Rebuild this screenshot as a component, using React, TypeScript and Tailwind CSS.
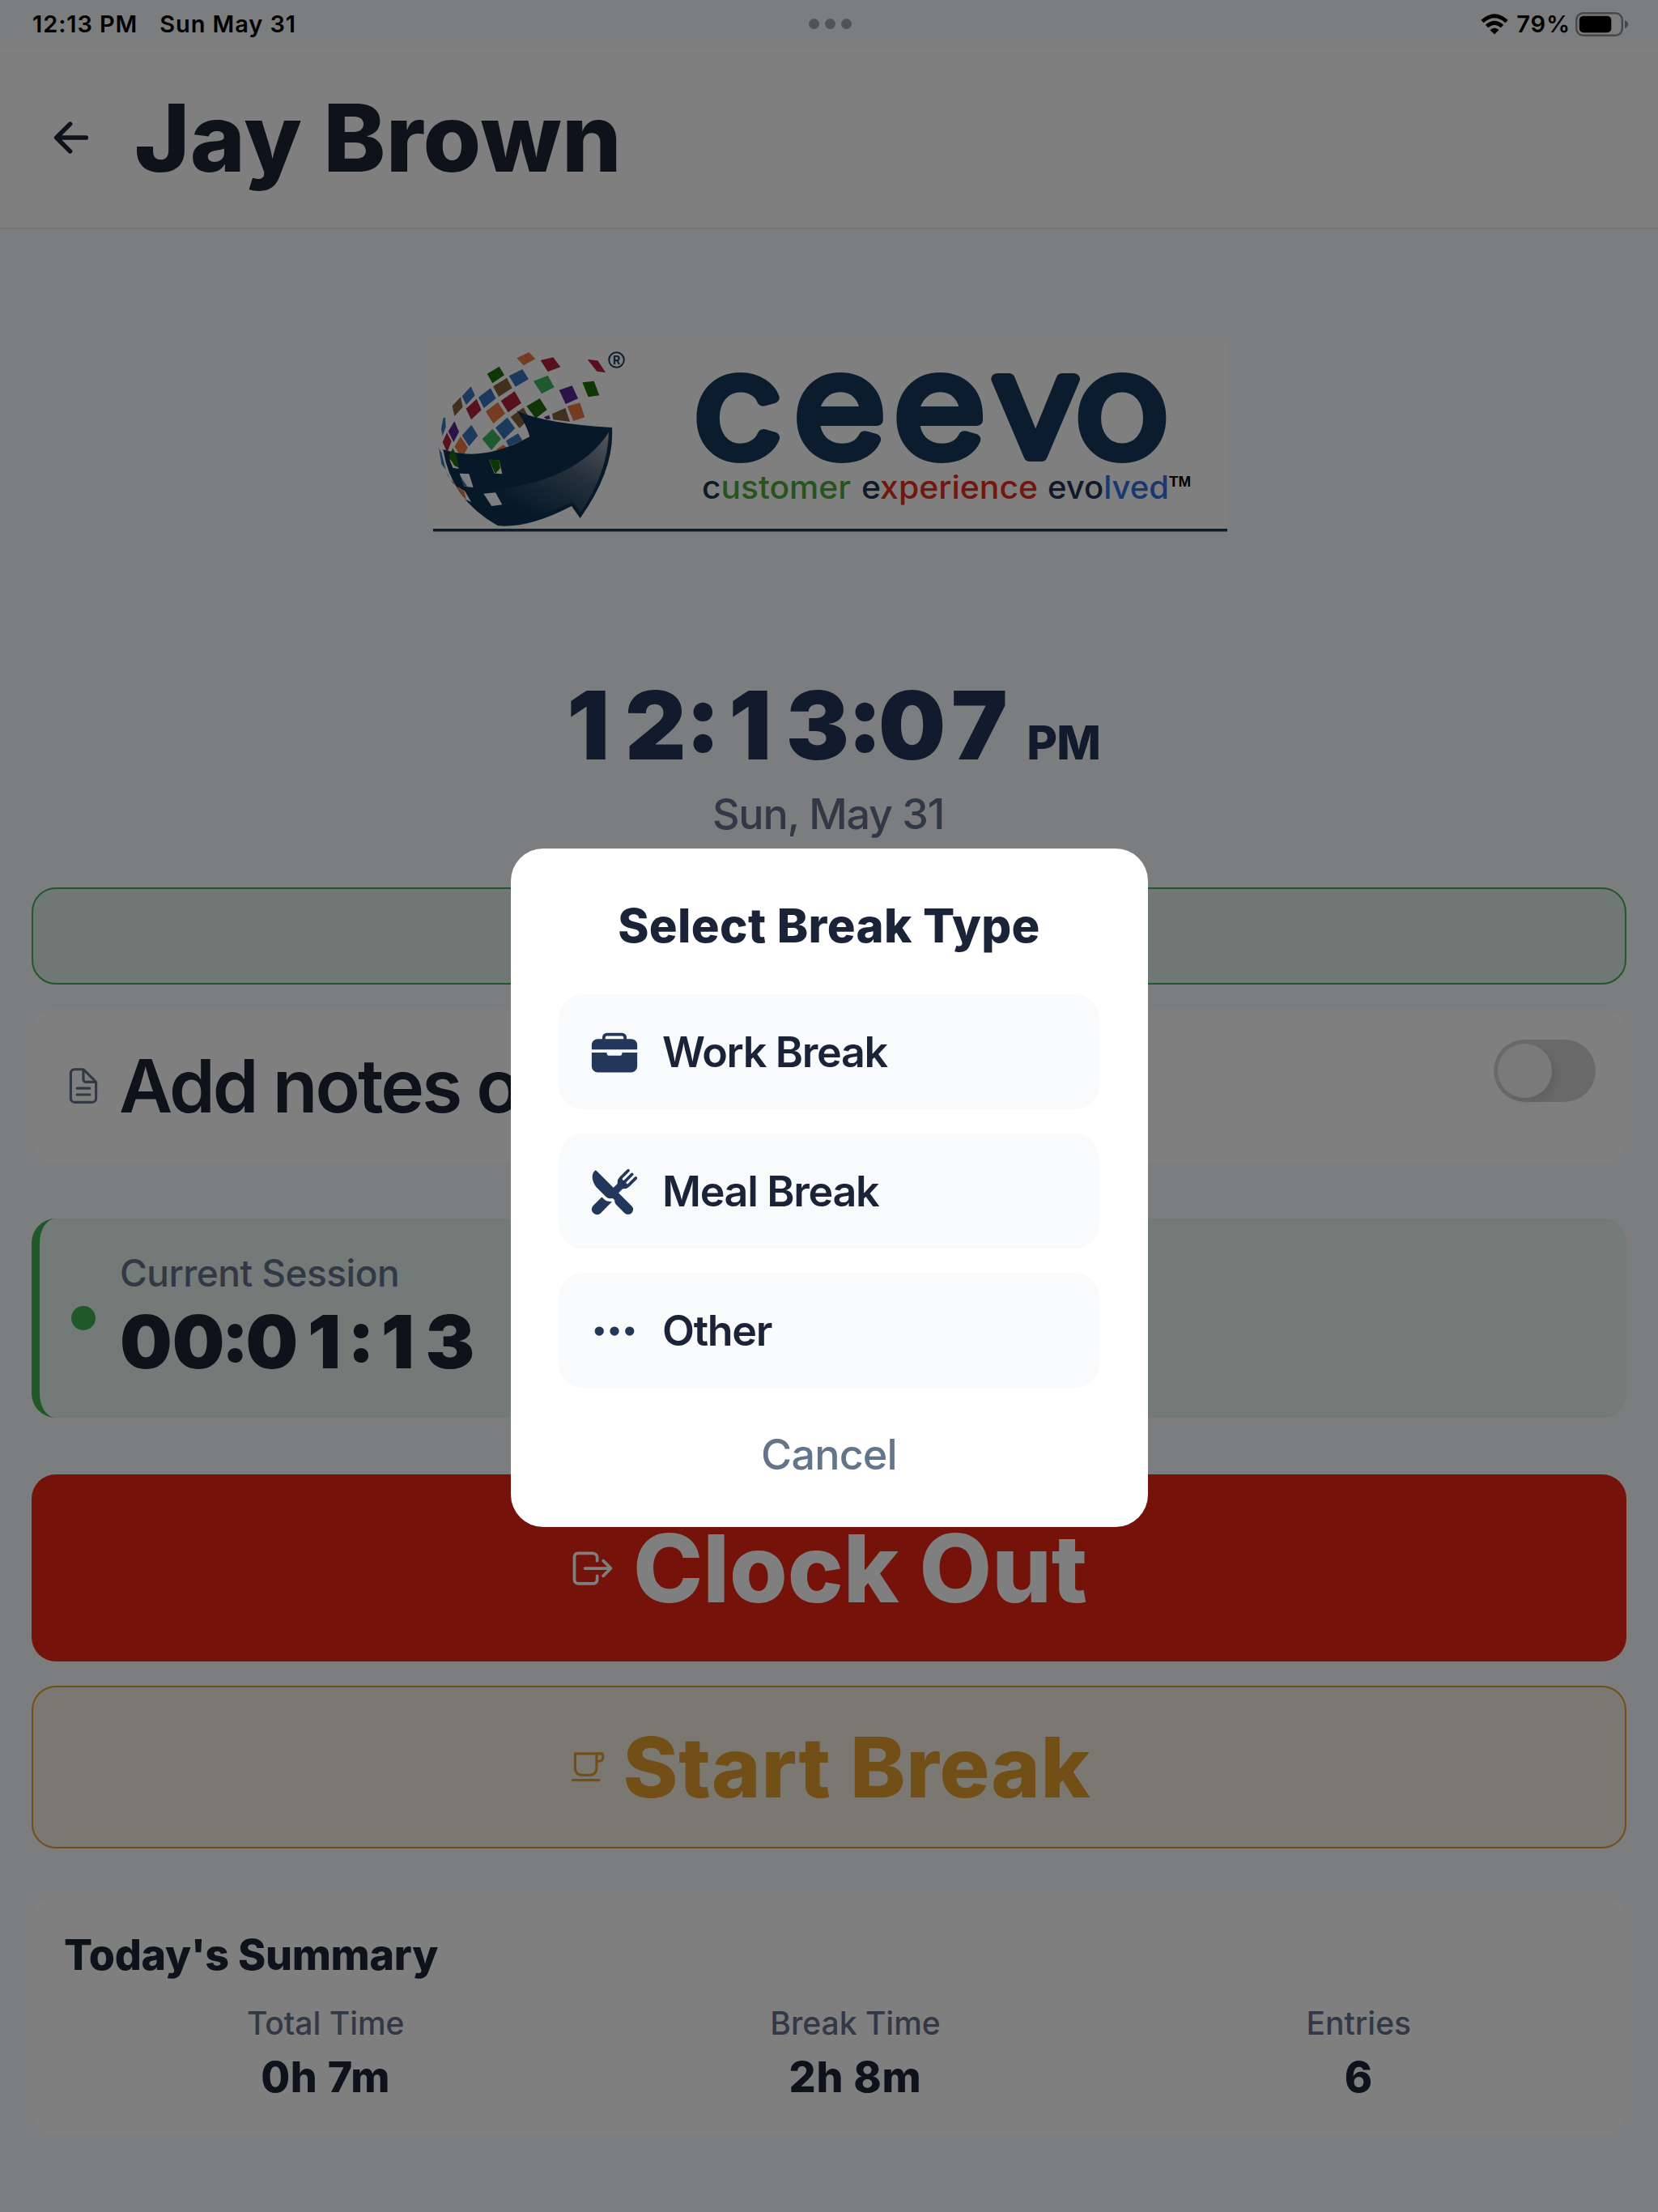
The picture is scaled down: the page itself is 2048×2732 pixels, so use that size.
import { useState } from "react";
import {
  IoArrowBack,
  IoBriefcase,
  IoCafeOutline,
  IoDocumentTextOutline,
  IoEllipsisHorizontal,
  IoLogOutOutline,
  IoRestaurant,
} from "react-icons/io5";

const BREAK_TYPES = [
  { label: "Work Break", icon: IoBriefcase },
  { label: "Meal Break", icon: IoRestaurant },
  { label: "Other", icon: IoEllipsisHorizontal },
];

const SUMMARY = [
  { label: "Total Time", value: "0h 7m" },
  { label: "Break Time", value: "2h 8m" },
  { label: "Entries", value: "6" },
];

// Globe tiles, one polygon per coloured square
const TILES = [
  { fill: "#e87a44", points: "355,97 400,75 424,100 380,124" },
  { fill: "#b02038", points: "443,105 490,94 517,130 470,147" },
  { fill: "#b02038", points: "617,102 655,106 684,150 652,146" },
  { fill: "#1e6e0c", points: "245,155 290,128 309,160 265,190" },
  { fill: "#3674ba", points: "326,163 376,138 399,175 350,203" },
  { fill: "#84603f", points: "267,202 318,170 338,208 288,240" },
  { fill: "#40b060", points: "417,182 470,161 494,205 447,229" },
  { fill: "#5a2494", points: "512,215 560,199 582,247 536,267" },
  { fill: "#1e6e0c", points: "598,187 641,182 661,235 620,241" },
  { fill: "#3674ba", points: "185,202 200,235 168,271 152,238" },
  { fill: "#3674ba", points: "213,242 258,208 278,246 233,282" },
  { fill: "#84603f", points: "147,241 155,278 124,312 116,274" },
  { fill: "#b02038", points: "167,284 206,248 224,289 186,325" },
  { fill: "#b02038", points: "296,255 347,220 372,263 323,298" },
  { fill: "#e87a44", points: "240,295 285,260 312,302 268,340" },
  { fill: "#1e6e0c", points: "391,275 440,246 467,288 425,320" },
  { fill: "#84603f", points: "486,303 535,282 552,332 490,325" },
  { fill: "#e87a44", points: "542,275 589,262 607,316 565,330" },
  { fill: "#84603f", points: "332,315 380,280 402,320 365,357" },
  { fill: "#5a2494", points: "455,316 474,308 480,322 465,324" },
  { fill: "#3674ba", points: "276,355 320,317 349,357 307,398" },
  { fill: "#40b060", points: "227,397 265,359 297,396 261,438" },
  { fill: "#3674ba", points: "152,383 187,344 211,384 178,424" },
  { fill: "#3674ba", points: "315,403 360,376 376,402 325,424" },
  { fill: "#5a2494", points: "101,368 124,331 141,370 121,408" },
  { fill: "#e87a44", points: "124,425 147,387 174,428 152,465" },
  { fill: "#b02038", points: "80,408 96,373 113,405 97,447" },
  { fill: "#3674ba", points: "75,360 82,320 90,316 92,352 80,385" },
  { fill: "#e87a44", points: "278,436 305,418 318,428 290,440" },
  { fill: "#3674ba", points: "66,430 76,448 92,510 76,490" },
];

const Logo = () => (
  <svg width="981" height="234" viewBox="0 0 981 234" className="bg-white overflow-visible">
    <defs>
      <linearGradient id="sheen" x1="0.95" y1="0" x2="0.25" y2="0.75">
        <stop offset="0" stopColor="#a3abb5" />
        <stop offset="0.45" stopColor="#4c6078" />
        <stop offset="1" stopColor="#0e3353" />
      </linearGradient>
    </defs>
    <g transform="translate(-15 -13) scale(0.33333)">
      {TILES.map((tile) => (
        <polygon key={tile.points} points={tile.points} fill={tile.fill} />
      ))}
      <path
        d="M355 292Q460 340 708 354Q718 510 590 690L558 645Q400 728 285 718Q110 620 82 435Q230 485 403 388Q388 335 355 292Z"
        fill="#0e3353"
      />
      <path d="M696 372Q580 550 270 585Q200 590 150 580Q210 660 290 690Q420 700 562 630L592 668Q692 520 696 372Z" fill="url(#sheen)" />
      <polygon points="143,524 178,526 194,576 160,572" fill="#fff" />
      <polygon points="145,530 155,548 172,572 160,572" fill="#3674ba" />
      <polygon points="232,599 276,595 301,640 262,645" fill="#fff" />
      <polygon points="252,473 290,475 301,526 272,524" fill="#fff" />
      <polygon points="252,473 290,475 294,505 275,526" fill="#1e6e0c" />
      <polygon points="105,470 138,500 139,507 118,503" fill="#fff" />
      <polygon points="104,462 118,430 134,465 138,502 124,496" fill="#1e6e0c" />
      <polygon points="136,574 163,590 186,630 165,620" fill="#fff" />
      <polygon points="132,572 160,590 168,620 152,606" fill="#e87a44" />
      <polygon points="92,515 100,535 130,568 118,562" fill="#e87a44" />
    </g>
    <g fontFamily="Inter, sans-serif">
      <circle cx="226.500" cy="21.500" r="9.300" fill="none" stroke="#1c3f66" strokeWidth="2" />
      <text x="226.500" y="26.700" fontSize="14" fontWeight="700" textAnchor="middle" fill="#1c3f66">R</text>
      <text
        x="290.500 402 513 622 715"
        y="140"
        transform="scale(1.11 1)"
        fontSize="174"
        fontWeight="300"
        fill="#15385a"
        stroke="#15385a"
        strokeWidth="14"
        strokeLinejoin="round"
      >
        ceevo
      </text>
    </g>
    <g fontFamily="Inter, sans-serif" fontSize="39" fontWeight="500">
      <text x="332" y="193" textLength="184" lengthAdjust="spacingAndGlyphs" fill="#4fa83c">
        <tspan fill="#1c3454">c</tspan>ustomer
      </text>
      <text x="529" y="193" textLength="218" lengthAdjust="spacingAndGlyphs" fill="#e62c20">
        <tspan fill="#1c3454">e</tspan>xperience
      </text>
      <text x="759" y="193" textLength="150" lengthAdjust="spacingAndGlyphs" fill="#3470e0">
        <tspan fill="#1c3454">evo</tspan>lved
      </text>
      <text x="909" y="178" fontFamily="Liberation Sans" fontSize="19" fontWeight="700" textLength="27" lengthAdjust="spacingAndGlyphs" fill="#000">
        TM
      </text>
    </g>
    <rect y="230" width="981" height="3.500" fill="#15385a" />
  </svg>
);

const Digits = ({ value }: { value: string }) => (
  <>
    {value.split("").map((char, i) => (
      <span key={i} className={`inline-flex justify-center ${char === ":" ? "w-[0.287em]" : "w-[0.711em]"}`}>
        {char === ":" ? <span className="relative -top-[0.08em]">:</span> : char}
      </span>
    ))}
  </>
);

const StatusBar = () => (
  <div className="h-[59px] pl-[40px] pr-[36px] grid grid-cols-3 items-center text-[29px] leading-none font-semibold tracking-[0.9px] text-black">
    <div className="flex gap-[27px]">
      <span>12:13 PM</span>
      <span>Sun May 31</span>
    </div>
    <div className="flex justify-center gap-[7px]">
      <span className="size-[13px] rounded-full bg-[#a4a6a8]" />
      <span className="size-[13px] rounded-full bg-[#a4a6a8]" />
      <span className="size-[13px] rounded-full bg-[#a4a6a8]" />
    </div>
    <div className="flex items-center justify-end">
      <svg width="34" height="26" viewBox="0 0 34 26" fill="none" stroke="#000" strokeWidth="5">
        <path d="M2 9.500Q17 -4 32 9.500" />
        <path d="M7.500 15.500Q17 7 26.500 15.500" />
        <path d="M17 25.500L11.500 20Q17 15 22.500 20Z" fill="#000" stroke="none" />
      </svg>
      <span className="ml-[10px]">79%</span>
      <svg width="66" height="30" viewBox="0 0 66 30" className="ml-[6px]">
        <rect x="1.200" y="1.200" width="56.600" height="27.600" rx="8.500" fill="none" stroke="#8f9092" strokeWidth="2.400" />
        <rect x="4.800" y="4.800" width="39.500" height="20.400" rx="5" fill="#000" />
        <path d="M61 10Q65 11.500 65 15T61 20Z" fill="#8f9092" />
      </svg>
    </div>
  </div>
);

const BreakModal = ({ onClose }: { onClose: () => void }) => (
  <div className="absolute inset-0 bg-black/50 flex items-start justify-center pt-[1048px]">
    <div className="w-[787px] h-[838px] rounded-[40px] bg-white px-[59.500px] pt-[60px] flex flex-col">
      <h2 className="h-[70px] leading-[70px] mb-[50px] text-center text-[58px] font-[850] tracking-[0.4px] text-[#1b2338]">
        Select Break Type
      </h2>
      <div className="flex flex-col gap-[30px]">
        {BREAK_TYPES.map(({ label, icon: Icon }) => (
          <button key={label} className="h-[142px] rounded-[30px] bg-[#f8fafc] pl-[39px] pt-[2px] flex items-center gap-[29px]">
            <Icon className="size-[60px] text-[#22375a]" />
            <span className="text-[52px] font-semibold tracking-[-1.300px] text-[#1b2338]">{label}</span>
          </button>
        ))}
      </div>
      <button
        className="h-[70px] mt-[48px] leading-[70px] text-[52px] font-medium tracking-[-0.8px] text-[#64748b]"
        onClick={onClose}
      >
        Cancel
      </button>
    </div>
  </div>
);

const App = () => {
  const [modalOpen, setModalOpen] = useState(true);

  return (
    <div className="relative w-[2048px] h-[2732px] overflow-hidden bg-[#f8fafc] font-['Inter',sans-serif] text-[#1c2637]">
      <StatusBar />

      <header className="h-[224px] pl-[58px] flex items-center bg-white border-b-2 border-[#e8eaf2]">
        <IoArrowBack className="size-[60px]" />
        <h1 className="ml-[48px] text-[116px] leading-none font-[850] tracking-[0.4px]">Jay Brown</h1>
      </header>

      <main className="px-[39px] flex flex-col">
        <div className="mt-[140px] pl-[2px] flex justify-center">
          <Logo />
        </div>

        {/* Current time */}
        <div className="mt-[179px] h-[120px] pr-[4px] flex justify-center items-baseline leading-[120px] text-[#22365a]">
          <span className="text-[117px] font-black">
            <Digits value="12:13:07" />
          </span>
          <span className="ml-[17px] text-[58px] font-extrabold tracking-[-1px]">PM</span>
        </div>
        <p className="mt-[20px] h-[60px] leading-[60px] text-center text-[52px] font-medium tracking-[-1.200px] pr-[2px] text-[#64708a]">
          Sun, May 31
        </p>

        <div className="mt-[60px] h-[120px] rounded-[30px] border-[2.500px] border-[#43b054] bg-[#def0ea]" />

        <div className="mt-[30px] h-[190px] rounded-[30px] bg-white pl-[39px] pr-[38px] flex items-center">
          <IoDocumentTextOutline className="size-[50px] text-[#64708a]" />
          <span className="ml-[19px] text-[91px] leading-none font-semibold tracking-[-2.900px]">Add notes or</span>
          <span className="ml-auto mt-[38px] self-start w-[126px] h-[77px] rounded-full bg-[#d3d3d3] p-[5px]">
            <span className="block size-[67px] rounded-full bg-[#f4f4f4] shadow-[6px_6px_10px_rgba(0,0,0,0.08)]" />
          </span>
        </div>

        {/* Current session */}
        <div className="mt-[69px] h-[246px] rounded-[30px] border-l-[10px] border-[#43b054] bg-[#e6f4ef] pl-[39px] flex items-center">
          <span className="size-[30px] rounded-full bg-[#43b054]" />
          <div className="ml-[30px]">
            <p className="h-[55px] leading-[55px] text-[46px] font-medium tracking-[-0.5px] text-[#64708a]">Current Session</p>
            <p className="mt-[2px] h-[110px] leading-[110px] text-[91px] font-black">
              <Digits value="00:01:13" />
            </p>
          </div>
        </div>

        <button className="mt-[70px] h-[231px] rounded-[30px] bg-[#ea2415] pr-[3px] flex items-center justify-center text-white">
          <IoLogOutOutline className="size-[60px]" />
          <span className="ml-[20px] text-[116px] leading-none font-[850] tracking-[-0.1px]">Clock Out</span>
        </button>

        <button className="mt-[30px] h-[201px] rounded-[30px] border-[2.500px] border-[#e69e30] bg-[#f7efe3] flex items-center justify-center text-[#e69e30]">
          <IoCafeOutline className="size-[50px]" />
          <span className="ml-[19px] text-[103px] leading-none font-[850] tracking-[0.8px]">Start Break</span>
        </button>

        {/* Today's summary */}
        <section className="mt-[60px] h-[293px] rounded-[30px] bg-white px-[40px] pt-[40px]">
          <h3 className="h-[63px] leading-[63px] text-[52px] font-extrabold tracking-[-0.3px]">Today's Summary</h3>
          <div className="mt-[29px] flex justify-around">
            {SUMMARY.map((item) => (
              <div key={item.label} className="text-center">
                <p className="h-[48px] leading-[48px] text-[39px] font-medium text-[#64708a]">{item.label}</p>
                <p className="mt-[12px] h-[62px] leading-[62px] text-[52px] font-extrabold tracking-[0.7px]">{item.value}</p>
              </div>
            ))}
          </div>
        </section>
      </main>

      {modalOpen && <BreakModal onClose={() => setModalOpen(false)} />}
    </div>
  );
};

export default App;
